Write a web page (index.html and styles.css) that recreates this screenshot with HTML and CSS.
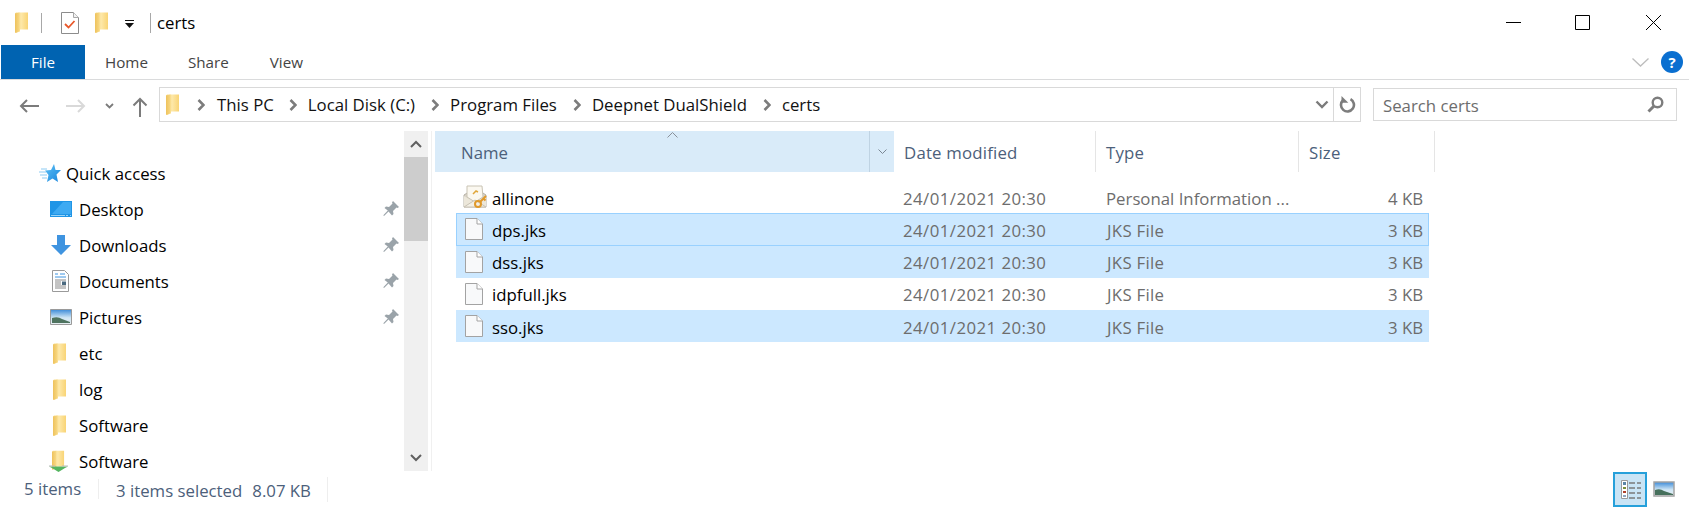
FILE: index.html
```html
<!DOCTYPE html>
<html lang="en">
<head>
<meta charset="utf-8">
<title>certs</title>
<link rel="stylesheet" href="styles.css">
</head>
<body>
<svg class="defs" width="0" height="0" aria-hidden="true">
  <defs>
    <linearGradient id="fg" x1="0" x2="1" y1="0" y2="0"><stop offset="0" stop-color="#f7dc8e"/><stop offset=".5" stop-color="#fde7a6"/><stop offset="1" stop-color="#f9d475"/></linearGradient>
    <linearGradient id="ff" x1="0" x2="1" y1="0" y2="0"><stop offset="0" stop-color="#eec25c"/><stop offset="1" stop-color="#f8d985"/></linearGradient>
    <linearGradient id="sg" x1="0" x2="1" y1="0" y2="1"><stop offset="0" stop-color="#5cc0f5"/><stop offset="1" stop-color="#1a86dd"/></linearGradient>
    <symbol id="folder" viewBox="0 0 14 21"><path d="M0 1.500 1 .5h12v17H5v2L.6 21 0 20z" fill="url(#fg)"/><path d="M0 1.500 4.600 .5V19L.6 21 0 20z" fill="url(#ff)"/></symbol>
    <symbol id="file" viewBox="0 0 18 22"><path d="M.5.500h11.500l5.500 5.500v15.500H.5z" fill="#f8f9fa" stroke="#a3a3a3"/><path d="M12 .5v5.500h5.500" fill="#fff" stroke="#a3a3a3"/></symbol>
    <symbol id="pin" viewBox="0 0 16 16"><path d="M10 0l6 6-1.500 1-1-.5L10 10l.5 3L9 14.500 5.500 10.500 1 15l-.7-.7 4.500-4.800L1.500 7 3 5.500l3 .5 3.500-3.500-.5-1z" fill="#9aa3a9"/></symbol>
    <symbol id="chev" viewBox="0 0 8 12"><path d="M1.500 1 6.500 6l-5 5" fill="none" stroke="#7c7c7c" stroke-width="2.600"/></symbol>
  </defs>
</svg>
<div class="window">
  <header class="titlebar">
    <svg class="ic-folder qa1"><use href="#folder"/></svg>
    <span class="tsep sep1"></span>
    <svg class="ic-props" viewBox="0 0 18 22"><path d="M.5.500h12l5 5v16H.5z" fill="#fff" stroke="#8c8c8c"/><path d="M12.500.5v5h5" fill="#f2f2f2" stroke="#a8a8a8"/><path d="M4 12l3.500 3.500L13.500 9" fill="none" stroke="#e8582a" stroke-width="1.800"/></svg>
    <svg class="ic-folder qa2"><use href="#folder"/></svg>
    <svg class="ic-qadrop" viewBox="0 0 9 9"><path d="M0 0h9v1H0z" fill="#111"/><path d="M0 3h9L4.500 8z" fill="#111"/></svg>
    <span class="tsep sep2"></span>
    <span class="ttl">certs</span>
    <div class="winbtns">
      <svg class="wb wb-min" viewBox="0 0 15 15"><path d="M0 7.500h15" stroke="#000" fill="none"/></svg>
      <svg class="wb wb-max" viewBox="0 0 15 15"><path d="M.5.500h14v14H.5z" stroke="#000" fill="none"/></svg>
      <svg class="wb wb-close" viewBox="0 0 15 15"><path d="M0 0l15 15M15 0L0 15" stroke="#000" fill="none"/></svg>
    </div>
  </header>

  <nav class="ribbon">
    <span class="tab tab-file">File</span>
    <span class="tab tab-home">Home</span>
    <span class="tab tab-share">Share</span>
    <span class="tab tab-view">View</span>
    <svg class="rb-chev" viewBox="0 0 17 9"><path d="M.5.500l8 7.500 8-7.500" fill="none" stroke="#bdbdbd" stroke-width="1.300"/></svg>
    <span class="help">?</span>
  </nav>

  <div class="addrrow">
    <svg class="nb nb-back" viewBox="0 0 20 14"><path d="M20 7H2M8 1 2 7l6 6" fill="none" stroke="#7b7b7b" stroke-width="2"/></svg>
    <svg class="nb nb-fwd" viewBox="0 0 20 14"><path d="M0 7h18M12 1l6 6-6 6" fill="none" stroke="#d9d9d9" stroke-width="2"/></svg>
    <svg class="nb nb-drop" viewBox="0 0 9 6"><path d="M1 1l3.500 3.500L8 1" fill="none" stroke="#7b7b7b" stroke-width="1.800"/></svg>
    <svg class="nb nb-up" viewBox="0 0 16 20"><path d="M8 20V2M1.500 8.500 8 2l6.500 6.500" fill="none" stroke="#7b7b7b" stroke-width="2"/></svg>
    <div class="addr">
      <svg class="ic-folder ad-f"><use href="#folder"/></svg>
      <svg class="crumb-chev chev-first"><use href="#chev"/></svg><span class="crumb">This PC</span>
      <svg class="crumb-chev chev-second"><use href="#chev"/></svg><span class="crumb">Local Disk (C:)</span>
      <svg class="crumb-chev"><use href="#chev"/></svg><span class="crumb">Program Files</span>
      <svg class="crumb-chev"><use href="#chev"/></svg><span class="crumb">Deepnet DualShield</span>
      <svg class="crumb-chev"><use href="#chev"/></svg><span class="crumb">certs</span>
      <svg class="addr-drop" viewBox="0 0 14 9"><path d="M1.500 1.500 7 7l5.500-5.500" fill="none" stroke="#7b7b7b" stroke-width="2.400"/></svg>
      <span class="addr-refresh">
        <svg viewBox="0 0 17 17"><path d="M11.500 3.200A6.500 6.500 0 1 1 4 4.200" fill="none" stroke="#7d7d7d" stroke-width="2.600"/><path d="M2.500 0v6.800h6.800z" fill="#7d7d7d"/></svg>
      </span>
    </div>
    <div class="search">
      <span class="search-text">Search certs</span>
      <svg viewBox="0 0 17 17"><circle cx="10.500" cy="6.500" r="4.800" fill="none" stroke="#7d7d7d" stroke-width="2.400"/><path d="M7 10 1.500 15.500" stroke="#7d7d7d" stroke-width="3" fill="none"/></svg>
    </div>
  </div>

  <main class="main">
    <aside class="tree">
      <div class="ti ti-qa"><svg class="i-star" viewBox="0 0 22 18"><path d="M15 0l1.500 6H22l-4.500 4.500L19 18l-5.500-3.500L8 18l1.500-7L6 6.500l6-.5z" fill="url(#sg)"/><path d="M2 5h6M0 8h7M1 11h7M3 14h5" stroke="#8ccbf3" fill="none"/></svg><span>Quick access</span></div>
      <div class="ti"><svg class="i-nav i-desk" viewBox="0 0 22 16"><path d="M0 0h22v16H0z" fill="#1f95e6"/><path d="M2 13 13 1h8v12z" fill="#3eaaf2"/><path d="M1 14.500h20" stroke="#9ad4f7" stroke-dasharray="14 1 2 2"/></svg><span>Desktop</span><svg class="pin"><use href="#pin"/></svg></div>
      <div class="ti"><svg class="i-nav i-dl" viewBox="0 0 20 20"><path d="M6 0h8v10h6l-10 10L0 10h6z" fill="#3f94e0"/></svg><span>Downloads</span><svg class="pin"><use href="#pin"/></svg></div>
      <div class="ti"><svg class="i-nav i-doc" viewBox="0 0 17 22"><path d="M.5.500h12l4 4v17H.5z" fill="#fff" stroke="#9a9a9a"/><path d="M3 4h3M8 4h5M3 7h11" stroke="#3f94e0" fill="none"/><path d="M3 10h11M3 12h6M3 14h6M3 16h11M3 18h11" stroke="#8a8a8a" fill="none"/><path d="M10 11.500h4v3.500h-4z" fill="#4b6a80"/></svg><span>Documents</span><svg class="pin"><use href="#pin"/></svg></div>
      <div class="ti"><svg class="i-nav i-pic" viewBox="0 0 22 16"><defs><linearGradient id="sky" x1="0" x2="0" y1="0" y2="1"><stop offset="0" stop-color="#3b8ad8"/><stop offset=".55" stop-color="#cfe6f5"/><stop offset="1" stop-color="#e8eef0"/></linearGradient></defs><path d="M.5.500h21v15H.5z" fill="url(#sky)" stroke="#9a9a9a"/><path d="M2 9q6-2 10 1l8 3v1H2z" fill="#4f7460"/></svg><span>Pictures</span><svg class="pin"><use href="#pin"/></svg></div>
      <div class="ti ti-f"><svg class="ic-folder"><use href="#folder"/></svg><span>etc</span></div>
      <div class="ti ti-f"><svg class="ic-folder"><use href="#folder"/></svg><span>log</span></div>
      <div class="ti ti-f"><svg class="ic-folder"><use href="#folder"/></svg><span>Software</span></div>
      <div class="ti ti-s"><svg class="i-sync" viewBox="0 0 19 22"><use href="#folder" x="3" width="13" height="20"/><path d="M0 16.500h19l-3 1.500-6.500 4L3 18z" fill="#55b560"/><path d="M0 16h6M13 16h6" stroke="#bbb"/></svg><span>Software</span></div>
    </aside>
    <div class="vscroll">
      <svg class="sb-arrow sb-up" viewBox="0 0 12 8"><path d="M1 7l5-5 5 5" fill="none" stroke="#606060" stroke-width="2"/></svg>
      <div class="sb-thumb"></div>
      <svg class="sb-arrow sb-down" viewBox="0 0 12 8"><path d="M1 1l5 5 5-5" fill="none" stroke="#606060" stroke-width="2"/></svg>
    </div>
    <section class="list">
      <div class="head">
        <div class="hc hc-name"><span>Name</span>
          <svg class="sort" viewBox="0 0 11 6"><path d="M.5 5.500l5-5 5 5" fill="none" stroke="#8a9098"/></svg>
          <span class="hc-drop"><svg viewBox="0 0 9 5"><path d="M.5.500l4 4 4-4" fill="none" stroke="#7a8794"/></svg></span>
        </div>
        <div class="hc hc-date">Date modified</div>
        <div class="hc hc-type">Type</div>
        <div class="hc hc-size">Size</div>
      </div>
      <div class="rows">
        <div class="row">
          <svg class="i-file i-cert" viewBox="0 0 24 24"><path d="M1 10 12 3l11 7v12H1z" fill="#d9d4c8" stroke="#b5b0a5"/><path d="M4 1h15l1 11-8 5-8-5z" fill="#fbf8f0" stroke="#c9c3b4"/><path d="M1 11l10 6-10 5zM23 11l-10 6 10 5z" fill="#ece7da"/><path d="M1 22l11-7 11 7z" fill="#f3efe5" stroke="#c9c3b4"/><path d="M10 9l3-3 2 1" fill="none" stroke="#e0a63a" stroke-width="1.500"/><circle cx="15" cy="19" r="3" fill="none" stroke="#e0992b" stroke-width="2"/><path d="M17 17l6-6M20.500 13.500l2 2" stroke="#e0992b" stroke-width="2"/></svg>
          <span class="n">allinone</span><span class="d dt">24/01/2021 20:30</span><span class="d">Personal Information ...</span><span class="s">4 KB</span>
        </div>
        <div class="row sel focus"><svg class="i-file"><use href="#file"/></svg><span class="n">dps.jks</span><span class="d dt">24/01/2021 20:30</span><span class="d ty">JKS File</span><span class="s">3 KB</span></div>
        <div class="row sel"><svg class="i-file"><use href="#file"/></svg><span class="n">dss.jks</span><span class="d dt">24/01/2021 20:30</span><span class="d ty">JKS File</span><span class="s">3 KB</span></div>
        <div class="row"><svg class="i-file"><use href="#file"/></svg><span class="n">idpfull.jks</span><span class="d dt">24/01/2021 20:30</span><span class="d ty">JKS File</span><span class="s">3 KB</span></div>
        <div class="row sel"><svg class="i-file"><use href="#file"/></svg><span class="n">sso.jks</span><span class="d dt">24/01/2021 20:30</span><span class="d ty">JKS File</span><span class="s">3 KB</span></div>
      </div>
    </section>
  </main>

  <footer class="status">
    <span class="st st-count">5 items</span>
    <span class="st st-sel">3 items selected</span>
    <span class="st st-size">8.07 KB</span>
    <span class="view-btn">
      <svg viewBox="0 0 21 21"><path d="M1.500 1.500h6v18h-6z" fill="#fff" stroke="#9a9a9a"/><path d="M3 3h3v3H3z" fill="#5a86a8"/><path d="M3 8h3v2H3z" fill="#7d8f3a"/><path d="M3 12h3v2H3z" fill="#b0402a"/><path d="M3 16h3v2H3z" fill="#8fa6c0"/><path d="M9 4h6M17 4h4M9 9h6M17 9h4M9 14h6M17 14h4M9 19h6M17 19h4" stroke="#7a7a7a" stroke-width="1.300"/></svg>
    </span>
    <svg class="view-thumb" viewBox="0 0 22 16"><path d="M1 1h20v14H1z" fill="url(#sky)" stroke="#a3a3a3" stroke-width="1.500"/><path d="M2 9q5-2 9 1l9 3v1H2z" fill="#46705c"/></svg>
  </footer>
</div>
</body>
</html>
```

FILE: styles.css
```css
* { box-sizing: border-box; }
html, body { margin: 0; padding: 0; background: #fff; }
body { font-family: "Open Sans", "Noto Sans", sans-serif; font-size: 16.8px; color: #000; overflow: hidden; }
svg { display: block; flex: none; }
.defs { position: absolute; }
.window { width: 1689px; height: 507px; display: flex; flex-direction: column; }

/* title bar */
.titlebar { height: 45px; display: flex; align-items: center; flex: none; }
.ic-folder { width: 14px; height: 21px; }
.qa1 { margin-left: 15px; }
.tsep { width: 1px; height: 20px; background: #a8a8a8; }
.sep1 { margin-left: 12px; }
.ic-props { width: 18px; height: 22px; margin-left: 19px; }
.qa2 { margin-left: 16px; }
.ic-qadrop { width: 9px; height: 9px; margin-left: 16px; margin-top: 3px; }
.sep2 { margin-left: 16px; }
.ttl { margin-left: 6px; }
.winbtns { margin-left: auto; display: flex; align-items: center; padding-right: 28px; }
.wb { width: 15px; height: 15px; }
.wb-max { margin-left: 54px; }
.wb-close { margin-left: 56px; }

/* ribbon tabs */
.ribbon { height: 35px; display: flex; align-items: center; border-bottom: 1px solid #dadbdc; flex: none; padding-left: 1px; color: #3b3b3b; }
.tab { font-size: 15.2px; color: #444; line-height: 34px; }
.tab-file { width: 84px; height: 34px; background: #0063b1; color: #fff; text-align: center; }
.tab-home { margin-left: 20px; }
.tab-share { margin-left: 40px; }
.tab-view { margin-left: 41px; }
.rb-chev { width: 17px; height: 9px; margin-left: auto; }
.help { width: 22px; height: 22px; border-radius: 50%; background: #0a6fd0; color: #fff; font-weight: 700; font-size: 15px; line-height: 22px; text-align: center; margin: 0 6px 0 12px; }

/* address row */
.addrrow { height: 51px; display: flex; align-items: flex-start; padding-top: 7px; flex: none; }
.nb-back { width: 20px; height: 14px; margin: 12px 0 0 19px; }
.nb-fwd { width: 20px; height: 14px; margin: 12px 0 0 27px; }
.nb-drop { width: 9px; height: 6px; margin: 16px 0 0 19px; }
.nb-up { width: 16px; height: 20px; margin: 10px 0 0 18px; }
.addr { width: 1202px; height: 35px; margin-left: 11px; border: 1px solid #d9d9d9; display: flex; align-items: center; padding-left: 6px; color: #111; }
.crumb-chev { width: 8px; height: 12px; margin-left: 16px; }
.chev-first { margin-left: 17px; }
.chev-first + .crumb { margin-left: 12px; }
.chev-second { margin-left: 15px; }
.crumb { margin-left: 11px; }
.addr-drop { width: 14px; height: 9px; margin-left: auto; }
.addr-refresh { width: 27px; height: 33px; margin-left: 4px; border-left: 1px solid #d9d9d9; display: flex; align-items: center; justify-content: center; }
.addr-refresh svg { width: 17px; height: 17px; }
.search { width: 304px; height: 33px; margin: 1px 0 0 12px; border: 1px solid #d9d9d9; display: flex; align-items: center; justify-content: space-between; padding: 0 12px 0 9px; color: #6d6d6d; }
.search-text { padding-top: 2px; }
.search svg { width: 17px; height: 17px; }

/* main */
.main { height: 340px; display: flex; flex: none; }
.tree { width: 404px; padding-top: 24px; }
.ti { height: 36px; display: flex; align-items: center; padding-left: 79px; position: relative; }
.ti-qa { padding-left: 39px; }
.ti-qa span { margin-left: 5px; }
.i-star { width: 22px; height: 18px; }
.i-nav { margin-left: -29px; width: 22px; height: 16px; margin-right: 7px; }
.i-dl { width: 20px; height: 20px; margin-left: -28px; margin-right: 8px; }
.i-doc { width: 17px; height: 22px; margin-left: -27px; margin-right: 10px; }
.ti-f .ic-folder { margin-left: -26px; margin-right: 12px; }
.i-sync { width: 19px; height: 22px; margin-left: -30px; margin-right: 11px; }
.pin { width: 16px; height: 16px; position: absolute; left: 383px; top: 10px; }
.vscroll { width: 24px; background: #f0f0f0; display: flex; flex-direction: column; }
.sb-arrow { width: 12px; height: 8px; margin-left: 6px; }
.sb-up { margin-top: 9px; margin-bottom: 9px; }
.sb-thumb { height: 84px; background: #cdcdcd; }
.sb-down { margin-top: auto; margin-bottom: 9px; }
.list { flex: 1; margin-left: 3px; border-left: 1px solid #f0f0f0; padding-left: 3px; }
.head { height: 41px; display: flex; color: #4c607a; }
.hc { display: flex; align-items: center; border-right: 1px solid #e5e5e5; padding: 2px 0 0 10px; position: relative; letter-spacing: .2px; }
.hc-name { width: 459px; background: #d9ebf9; border-right: 0; padding-left: 26px; letter-spacing: 0; }
.hc-date { width: 202px; }
.hc-type { width: 203px; }
.hc-size { width: 136px; }
.sort { width: 11px; height: 6px; position: absolute; left: 232px; top: 1px; }
.hc-drop { position: absolute; right: 0; top: 0; width: 25px; height: 41px; border-left: 1px solid #bfd3e3; display: flex; align-items: center; justify-content: center; }
.hc-drop svg { width: 9px; height: 5px; }
.rows { padding: 9px 0 0 21px; width: 994px; }
.row { height: 32.25px; display: grid; grid-template-columns: 36px 411px 203px 1fr 60px; align-items: center; }
.row > span { padding-top: 2px; }
.row.sel { background: #cce8ff; }
.row.focus { box-shadow: inset 0 0 0 1px #99d1ff; }
.i-file { width: 18px; height: 22px; margin-left: 9px; }
.i-cert { width: 24px; height: 24px; margin-left: 7px; }
.n { color: #000; }
.d { color: #6d6d6d; }
.dt { letter-spacing: .45px; }
.ty { letter-spacing: .3px; margin-left: 1px; }
.s { color: #6d6d6d; text-align: right; padding-right: 6px; }

/* status */
.status { height: 36px; display: flex; align-items: center; color: #4c607a; flex: none; }
.st { padding-top: 2px; }
.st-count { margin-left: 24px; width: 75px; border-right: 1px solid #eee; line-height: 16px; height: 20px; }
.st-sel { margin-left: 17px; }
.st-size { margin-left: 10px; padding-right: 16px; border-right: 1px solid #eee; }
.view-btn { margin-left: auto; width: 34px; height: 35px; background: #c9e4f5; border: 2px solid #26a0da; display: flex; align-items: center; justify-content: center; }
.view-btn svg { width: 21px; height: 21px; }
.view-thumb { width: 22px; height: 16px; margin: 0 14px 0 6px; }
```
